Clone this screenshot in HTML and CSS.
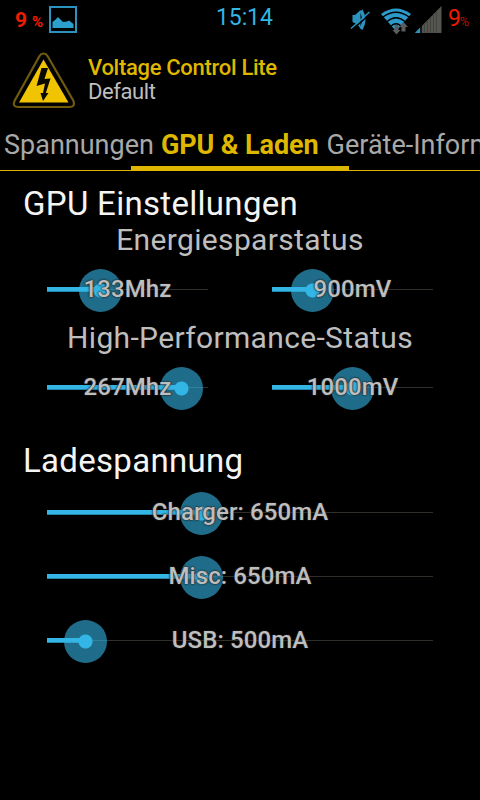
FILE: index.html
```html
<!DOCTYPE html>
<html lang="de">
<head>
<meta charset="UTF-8">
<meta name="viewport" content="width=device-width, initial-scale=1.0">
<title>Voltage Control Lite</title>
<link rel="stylesheet" href="styles.css">
</head>
<body>

<div class="statusbar">
    <div class="status-left">
        <span class="battery-bold">9</span><span class="percent-bold">%</span>
        <svg class="picture-icon" width="28" height="28" viewBox="0 0 28 28">
            <rect x="1" y="1" width="26" height="25" fill="none" stroke="#2b93bd" stroke-width="2"/>
            <path d="M3.500 22V16L6 14L9 11L14 16L18 15.500L20 14.500L24.500 18V22Z" fill="#2b9fcd"/>
        </svg>
    </div>
    <span class="clock">15:14</span>
    <div class="status-right">
        <svg width="92" height="40" viewBox="350 0 92 40">
            <!-- muted speaker -->
            <path d="M352.500 15H355L360.500 10V28L356.500 24L352.500 22Z" fill="#2b93bd"/>
            <path d="M361 10.500Q366.500 19.500 361 29" fill="none" stroke="#2b93bd" stroke-width="3.500"/>
            <path d="M352 30L370 14" stroke="#000" stroke-width="1.500"/>
            <path d="M351 28.500L369.500 12" stroke="#2b93bd" stroke-width="1.500"/>
            <!-- wifi -->
            <path d="M381 14Q396 3 411 14L397 30H395Z" fill="#2b9aca"/>
            <path d="M383 17Q396 7.500 409 17M387 21.500Q396 14 405 21.500M391 26Q396 21.500 401 26" fill="none" stroke="#000" stroke-width="1.300"/>
            <path d="M394.500 25H398.500V30H400.500L396.500 34.500L392.500 30H394.500Z" fill="#5c5c5c"/>
            <path d="M401.500 31.500V27H399.500L403.500 22L408 27H405.500V31.500Z" fill="#5c5c5c"/>
            <!-- signal -->
            <path d="M415 33L441.500 6V33Z" fill="#55554f"/>
            <path d="M415 33L420.500 27V33Z" fill="#2b93bd"/>
            <path d="M421 25V33" stroke="#000" stroke-width="1.500"/>
            <path d="M424.500 23V33M427.500 20V33M430.500 17V33M433.500 14V33M436.500 11V33" stroke="#44443f"/>
        </svg>
        <span class="battery">9</span><span class="percent">%</span>
    </div>
</div>

<div class="header">
    <svg class="logo" width="64" height="60" viewBox="12 51 64 60">
        <path d="M43.500 53.500Q46 53.500 47.500 56L73.500 101Q75.500 107 69.500 107H18.500Q12 107 14.500 101L39.500 56Q41 53.500 43.500 53.500Z" fill="#000" stroke="#6f5b0d" stroke-width="2.200"/>
        <path d="M43.500 59.500L68.500 102.500H19Z" fill="#f0c400"/>
        <path d="M41.500 68H48L44.500 79L50.500 78.500L45.800 93H48.500L43 101L40.500 93H43L45 83.500L36.500 86Z" fill="#0b0a00"/>
    </svg>
    <div class="titles">
        <div class="title">Voltage Control Lite</div>
        <div class="subtitle">Default</div>
    </div>
</div>

<div class="tabs">
    <span class="tab">Spannungen</span>
    <span class="tab active">GPU &amp; Laden</span>
    <span class="tab info">Geräte-Informationen</span>
</div>
<div class="indicator"><div class="bar"></div></div>

<div class="content">
    <h2 class="gpu">GPU Einstellungen</h2>
    <h3 class="energy">Energiesparstatus</h3>
    <div class="row">
        <div class="slider" style="--pos: 53px"><div class="fill"></div><div class="thumb"></div><span class="label">133Mhz</span></div>
        <div class="slider" style="--pos: 40px"><div class="fill"></div><div class="thumb"></div><span class="label">900mV</span></div>
    </div>
    <h3 class="performance">High-Performance-Status</h3>
    <div class="row">
        <div class="slider" style="--pos: 134px"><div class="fill"></div><div class="thumb"></div><span class="label">267Mhz</span></div>
        <div class="slider" style="--pos: 80px"><div class="fill"></div><div class="thumb"></div><span class="label">1000mV</span></div>
    </div>
    <h2 class="charge">Ladespannung</h2>
    <div class="charge-list">
        <div class="slider" style="--pos: 154px"><div class="fill"></div><div class="thumb"></div><span class="label">Charger: 650mA</span></div>
        <div class="slider" style="--pos: 154px"><div class="fill"></div><div class="thumb"></div><span class="label">Misc: 650mA</span></div>
        <div class="slider" style="--pos: 38px"><div class="fill"></div><div class="thumb"></div><span class="label">USB: 500mA</span></div>
    </div>
</div>

</body>
</html>
```
FILE: styles.css
```css
* {
    box-sizing: border-box;
}
body {
    margin: 0;
    width: 480px;
    height: 800px;
    overflow: hidden;
    background-color: #000;
    color: #bebebe;
    font-family: Roboto, "Liberation Sans", sans-serif;
}
.statusbar {
    display: grid;
    grid-template-columns: 216px 134px 130px;
    height: 40px;
    line-height: 40px;
}
.status-left {
    display: flex;
    padding-left: 15px;
    color: #ee1c00;
}
.battery-bold {
    width: 17px;
    font-size: 21px;
    font-weight: bold;
}
.percent-bold {
    width: 17px;
    font-size: 15px;
    font-weight: bold;
    line-height: 45px;
}
.picture-icon {
    margin-top: 6px;
}
.clock {
    font-size: 23px;
    line-height: 36px;
    letter-spacing: -0.1px;
    color: #33b5e5;
}
.status-right {
    display: flex;
    color: #ee1c00;
}
.status-right svg {
    flex-shrink: 0;
}
.battery {
    width: 12px;
    margin-left: 6px;
    font-size: 23px;
    line-height: 37px;
}
.percent {
    font-size: 12px;
    font-weight: 300;
    line-height: 44px;
}
.header {
    display: flex;
    height: 80px;
    padding: 11px 0 0 12px;
}
.titles {
    padding: 4px 0 0 12px;
    line-height: 25px;
}
.title {
    font-size: 22px;
    font-weight: 500;
    letter-spacing: -0.3px;
    color: #dfb700;
}
.subtitle {
    font-size: 22px;
    line-height: 23px;
    letter-spacing: -0.4px;
}
.tabs {
    display: flex;
    gap: 7px;
    height: 46px;
    padding-left: 4px;
    overflow: hidden;
    white-space: nowrap;
    font-size: 27px;
    line-height: 51px;
    color: #a8a8a8;
}
.tab.active {
    font-weight: bold;
    letter-spacing: -0.1px;
    color: #dfb700;
}
.tab.info {
    margin-left: 1px;
}
.indicator {
    height: 5px;
    border-bottom: 1px solid #dfb700;
}
.bar {
    width: 218px;
    height: 5px;
    margin-left: 131px;
    background-color: #dfb700;
}
.content {
    padding: 12px 47px 0;
}
h2, h3 {
    margin: 0;
    font-weight: normal;
    white-space: nowrap;
}
h2 {
    height: 40px;
    margin-left: -24px;
    font-size: 33px;
    line-height: 40px;
    letter-spacing: 0.3px;
    color: #f4f4f4;
}
h3 {
    height: 34px;
    font-size: 30px;
    line-height: 34px;
    letter-spacing: 0.35px;
    text-align: center;
}
.gpu {
    line-height: 42px;
}
.row {
    display: grid;
    grid-template-columns: 161px 161px;
    gap: 64px;
    height: 64px;
}
.charge {
    height: 39px;
    margin-top: 22px;
}
.slider {
    position: relative;
    height: 64px;
    text-align: center;
    background: linear-gradient(#30302a, #30302a) 0 32px / 100% 1px no-repeat;
}
.fill {
    position: absolute;
    top: 30px;
    left: 0;
    width: var(--pos);
    height: 5px;
    background-color: #33b5e5;
    border-bottom: 1px solid #2386aa;
}
.thumb {
    position: absolute;
    top: 11.5px;
    left: calc(var(--pos) - 21.5px);
    width: 43px;
    height: 43px;
    border-radius: 50%;
    background: radial-gradient(circle, #33b5e5 6.5px, rgba(51, 181, 229, 0.6) 7.5px);
}
.label {
    position: relative;
    display: inline-block;
    font-size: 24px;
    font-weight: 500;
    line-height: 64px;
    letter-spacing: 0.1px;
    white-space: nowrap;
    text-shadow: 0 0 2px #222, 0 0 2px #222;
}
```
